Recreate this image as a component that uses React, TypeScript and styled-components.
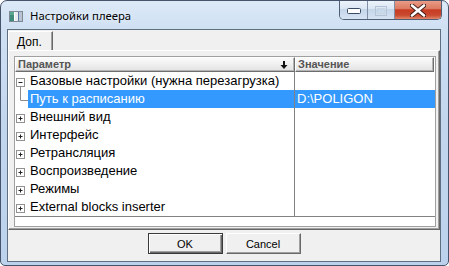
import styled, { createGlobalStyle } from "styled-components"

const GlobalStyle = createGlobalStyle`
  html, body { margin: 0; padding: 0; background: #ffffff; overflow: hidden; }
  * { box-sizing: border-box; }
`

const rows = [
    { name: "Базовые настройки (нужна перезагрузка)", kind: "open" },
    { name: "Путь к расписанию", kind: "child", value: "D:\\POLIGON", selected: true },
    { name: "Внешний вид", kind: "closed" },
    { name: "Интерфейс", kind: "closed" },
    { name: "Ретрансляция", kind: "closed" },
    { name: "Воспроизведение", kind: "closed" },
    { name: "Режимы", kind: "closed" },
    { name: "External blocks inserter", kind: "closed" },
]

function TreeGlyph({ kind }: { kind: string }) {
    if (kind === "child") {
        return (
            <svg width="13" height="18" viewBox="0 0 13 18">
                <path d="M5.5 0V10.5H13" stroke="#8c8c8c" strokeWidth="1" fill="none" />
            </svg>
        )
    }
    return (
        <svg width="13" height="18" viewBox="0 0 13 18">
            <rect x="1.5" y="6.5" width="8" height="8" fill="#fff" stroke="#919191" />
            <path d="M3.5 10.5H7.5" stroke="#222" />
            {kind === "closed" && <path d="M5.5 8.5V12.5" stroke="#222" />}
            {kind === "open" && <path d="M5.5 15V18" stroke="#8c8c8c" />}
        </svg>
    )
}

export default function App() {
    return (
        <>
            <GlobalStyle />
            <Window>
                <TitleBar>
                    <AppIcon>
                        <svg width="14" height="11" viewBox="0 0 14 11">
                            <rect x="0.5" y="0.5" width="13" height="10" fill="#e8ecef" stroke="#7d8a96" />
                            <rect x="1" y="1" width="4" height="9" fill="#3f8c7a" />
                            <rect x="1" y="1" width="4" height="3" fill="#5aa88f" />
                            <rect x="5" y="1" width="1" height="9" fill="#ffffff" />
                            <rect x="10" y="1" width="3" height="9" fill="#b8c4cf" />
                            <rect x="9" y="1" width="1" height="9" fill="#5a78a8" />
                        </svg>
                    </AppIcon>
                    <Caption>Настройки плеера</Caption>
                    <CaptionButtons>
                        <CaptionButton $w={28}>
                            <svg width="14" height="6" viewBox="0 0 14 6">
                                <rect x="0.5" y="0.5" width="13" height="5" rx="1" fill="#fff" stroke="#3b4a60" />
                            </svg>
                        </CaptionButton>
                        <CaptionButton $w={27}>
                            <svg width="12" height="10" viewBox="0 0 12 10">
                                <rect x="0.5" y="0.5" width="11" height="9" fill="none" stroke="#b5c3d6" />
                                <rect x="2.5" y="2.5" width="7" height="5" fill="none" stroke="#c9d4e3" />
                            </svg>
                        </CaptionButton>
                        <CloseButton>
                            <svg width="16" height="13" viewBox="0 0 16 13">
                                <path d="M2 1.5L14 11.5M14 1.5L2 11.5" stroke="#3d1a14" strokeWidth="4.4" strokeLinecap="round" />
                                <path d="M2 1.5L14 11.5M14 1.5L2 11.5" stroke="#ffffff" strokeWidth="2.6" strokeLinecap="round" />
                            </svg>
                        </CloseButton>
                    </CaptionButtons>
                </TitleBar>
                <FrameMiddle>
                    <Client>
                        <TabStrip>
                            <Tab>Доп.</Tab>
                        </TabStrip>
                        <TabPage>
                            <Grid>
                                <Header>
                                    <HeaderCell $width={280}>
                                        Параметр
                                        <svg width="8" height="8" viewBox="0 0 8 8">
                                            <path d="M3 0H5V4H7.5L4 8L0.5 4H3Z" fill="#111" />
                                        </svg>
                                    </HeaderCell>
                                    <HeaderCell $width={139}>Значение</HeaderCell>
                                </Header>
                                {rows.map((r) => (
                                    <Row key={r.name}>
                                        <NameCell>
                                            <Gutter>
                                                <TreeGlyph kind={r.kind} />
                                            </Gutter>
                                            <Label $selected={!!r.selected}>{r.name}</Label>
                                        </NameCell>
                                        <ValueCell $selected={!!r.selected}>{r.value}</ValueCell>
                                    </Row>
                                ))}
                                <GridFooter />
                            </Grid>
                        </TabPage>
                        <ButtonBar>
                            <Button $default>OK</Button>
                            <Button>Cancel</Button>
                        </ButtonBar>
                    </Client>
                </FrameMiddle>
            </Window>
        </>
    )
}

const Window = styled.div`
    width: 449px;
    height: 266px;
    display: flex;
    flex-direction: column;
    border: 1px solid #45546a;
    border-radius: 7px 7px 5px 5px;
    overflow: hidden;
    background: linear-gradient(180deg, #dce9f7 0px, #cfe0f3 28px, #c2d6ee 120px, #bcd2ec 266px);
`

const TitleBar = styled.div`
    height: 28px;
    display: flex;
    align-items: flex-start;
    flex-shrink: 0;
`

const AppIcon = styled.div`
    margin: 10px 0 0 8px;
    height: 11px;
    display: flex;
`

const Caption = styled.div`
    margin: 7px 0 0 7px;
    font-family: "Noto Sans", "Open Sans", sans-serif;
    font-size: 11.3px;
    line-height: 16px;
    color: #000;
    text-shadow: 0 0 6px rgba(255, 255, 255, 0.9);
`

const CaptionButtons = styled.div`
    margin-left: auto;
    margin-right: 6px;
    margin-top: -1px;
    display: flex;
    height: 20px;
    border: 1px solid #4f5f75;
    border-top: none;
    border-radius: 0 0 5px 5px;
    overflow: hidden;
`

const CaptionButton = styled.div<{ $w: number }>`
    width: ${(p) => p.$w}px;
    display: flex;
    align-items: center;
    justify-content: center;
    padding-top: 2px;
    border-right: 1px solid #7f8fa6;
    background: linear-gradient(180deg, #eef4fb 0%, #dce7f4 45%, #c6d6ea 50%, #d5e3f3 100%);
`

const CloseButton = styled.div`
    width: 46px;
    display: flex;
    align-items: center;
    justify-content: center;
    padding-top: 2px;
    background: linear-gradient(180deg, #eba08c 0%, #dc7a62 45%, #c83c22 52%, #c94a30 80%, #e2876a 100%);
`

const FrameMiddle = styled.div`
    flex: 1;
    display: flex;
    padding: 0 7px 3px 6px;
`

const Client = styled.div`
    width: 434px;
    height: 233px;
    display: flex;
    flex-direction: column;
    background: #f0f0f0;
    border: 1px solid #5f6e80;
`

const TabStrip = styled.div`
    height: 20px;
    display: flex;
    align-items: flex-end;
    flex-shrink: 0;
`

const Tab = styled.div`
    width: 45px;
    height: 20px;
    margin-bottom: -1px;
    padding: 3px 0 0 8px;
    background: #f0f0f0;
    border-top: 1px solid #ffffff;
    border-left: 1px solid #ffffff;
    border-right: 1px solid #696969;
    box-shadow: inset -1px 0 0 #a0a0a0;
    font-family: "Liberation Sans", Arial, sans-serif;
    font-size: 12px;
    line-height: 14px;
    color: #000;
`

const TabPage = styled.div`
    height: 180px;
    flex-shrink: 0;
    display: flex;
    padding: 5px 3px 2px 5px;
    border-top: 1px solid #ffffff;
    border-left: 1px solid #ffffff;
    border-right: 1px solid #696969;
    border-bottom: 1px solid #696969;
    box-shadow: inset -1px -1px 0 #a0a0a0;
`

const Grid = styled.div`
    flex: 1;
    display: flex;
    flex-direction: column;
    background: #ffffff;
    border: 1px solid #a0a0a0;
    font-family: "Liberation Sans", Arial, sans-serif;
    font-size: 13px;
`

const Header = styled.div`
    height: 15px;
    display: flex;
    flex-shrink: 0;
`

const HeaderCell = styled.div<{ $width: number }>`
    width: ${(p) => p.$width}px;
    display: flex;
    align-items: center;
    justify-content: space-between;
    padding: 0 6px 0 2px;
    background: linear-gradient(180deg, #fbfbfb 0%, #eeeeee 55%, #e2e2e2 100%);
    border-top: 1px solid #ffffff;
    border-left: 1px solid #ffffff;
    border-right: 1px solid #6d6d6d;
    border-bottom: 1px solid #6d6d6d;
    box-shadow: inset -1px -1px 0 #b4b4b4;
    font-size: 11px;
    font-weight: bold;
    color: #555555;
    line-height: 13px;
`

const Row = styled.div`
    height: 18px;
    display: grid;
    grid-template-columns: 280px 1fr;
    flex-shrink: 0;
`

const NameCell = styled.div`
    display: flex;
    border-right: 1px solid #828282;
`

const Gutter = styled.div`
    width: 13px;
    height: 18px;
    display: flex;
    flex-shrink: 0;
`

const Label = styled.div<{ $selected: boolean }>`
    flex: 1;
    padding-left: 2px;
    line-height: 18px;
    white-space: nowrap;
    overflow: hidden;
    color: ${(p) => (p.$selected ? "#ffffff" : "#000000")};
    background: ${(p) => (p.$selected ? "#3399ff" : "transparent")};
`

const ValueCell = styled.div<{ $selected: boolean }>`
    padding-left: 2px;
    line-height: 18px;
    white-space: nowrap;
    color: ${(p) => (p.$selected ? "#ffffff" : "#000000")};
    background: ${(p) => (p.$selected ? "#3399ff" : "transparent")};
`

const GridFooter = styled.div`
    flex: 1;
    border-top: 1px solid #828282;
`

const ButtonBar = styled.div`
    flex: 1;
    display: flex;
    justify-content: center;
    align-items: flex-start;
    gap: 3px;
    padding-top: 3px;
`

const Button = styled.div<{ $default?: boolean }>`
    width: 75px;
    height: 21px;
    display: flex;
    align-items: center;
    justify-content: center;
    background: #f0f0f0;
    font-family: "Liberation Sans", Arial, sans-serif;
    font-size: 11px;
    color: #000;
    border: 1px solid ${(p) => (p.$default ? "#3a3a3a" : "#ffffff")};
    ${(p) =>
        p.$default
            ? `box-shadow: inset 1px 1px 0 #ffffff, inset -1px -1px 0 #696969, inset -2px -2px 0 #a0a0a0;`
            : `border-right-color: #696969; border-bottom-color: #696969; box-shadow: inset -1px -1px 0 #a0a0a0;`}
`
